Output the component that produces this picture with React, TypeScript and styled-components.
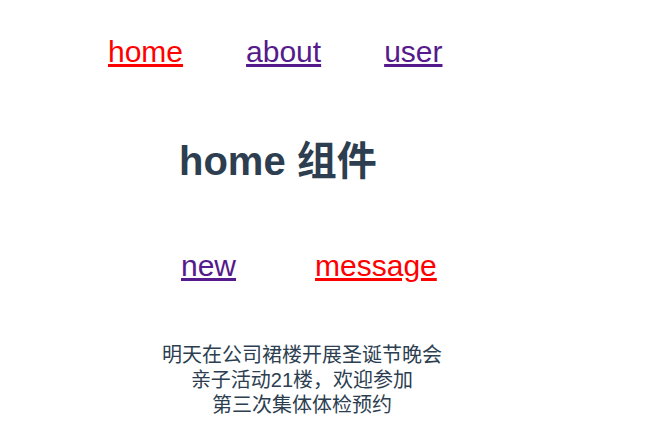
import React, { useState } from 'react';
import styled, { createGlobalStyle } from 'styled-components';

const GlobalStyle = createGlobalStyle`
  html, body {
    margin: 0;
    padding: 0;
    background: #fff;
  }
  body {
    font-family: "Liberation Sans", Arial, "Noto Sans CJK SC", sans-serif;
    color: #2c3e50;
  }
`;

const Page = styled.div`
  width: 654px;
  min-height: 440px;
  display: flex;
  flex-direction: column;
`;

const Nav = styled.nav<{ $top: number; $left: number; $gap: number }>`
  display: flex;
  gap: ${(p) => p.$gap}px;
  margin-top: ${(p) => p.$top}px;
  padding-left: ${(p) => p.$left}px;
`;

const NavLink = styled.a<{ $active: boolean }>`
  font-size: 30px;
  line-height: 34px;
  color: ${(p) => (p.$active ? '#ff0000' : '#551a8b')};
  text-decoration: underline;
  cursor: pointer;
`;

const Title = styled.h1`
  margin: 68px 0 0 179px;
  font-size: 40px;
  line-height: 48px;
  font-weight: 700;
  color: #2c3e50;
`;

const NewsList = styled.ul`
  list-style: none;
  margin: 60px 0 0 152px;
  padding: 0;
  width: 300px;
  text-align: center;
`;

const NewsItem = styled.li`
  font-size: 20px;
  line-height: 25px;
  color: #2c3e50;
`;

const news = ['明天在公司裙楼开展圣诞节晚会', '亲子活动21楼，欢迎参加', '第三次集体体检预约'];

export default function App() {
  const [page, setPage] = useState('home');
  const [tab, setTab] = useState('message');

  return (
    <>
      <GlobalStyle />
      <Page>
        <Nav $top={35} $left={108} $gap={63}>
          {['home', 'about', 'user'].map((name) => (
            <NavLink key={name} $active={page === name} onClick={() => setPage(name)}>
              {name}
            </NavLink>
          ))}
        </Nav>
        <Title>{page} 组件</Title>
        <Nav $top={64} $left={181} $gap={79}>
          {['new', 'message'].map((name) => (
            <NavLink key={name} $active={tab === name} onClick={() => setTab(name)}>
              {name}
            </NavLink>
          ))}
        </Nav>
        <NewsList>
          {news.map((text) => (
            <NewsItem key={text}>{text}</NewsItem>
          ))}
        </NewsList>
      </Page>
    </>
  );
}
